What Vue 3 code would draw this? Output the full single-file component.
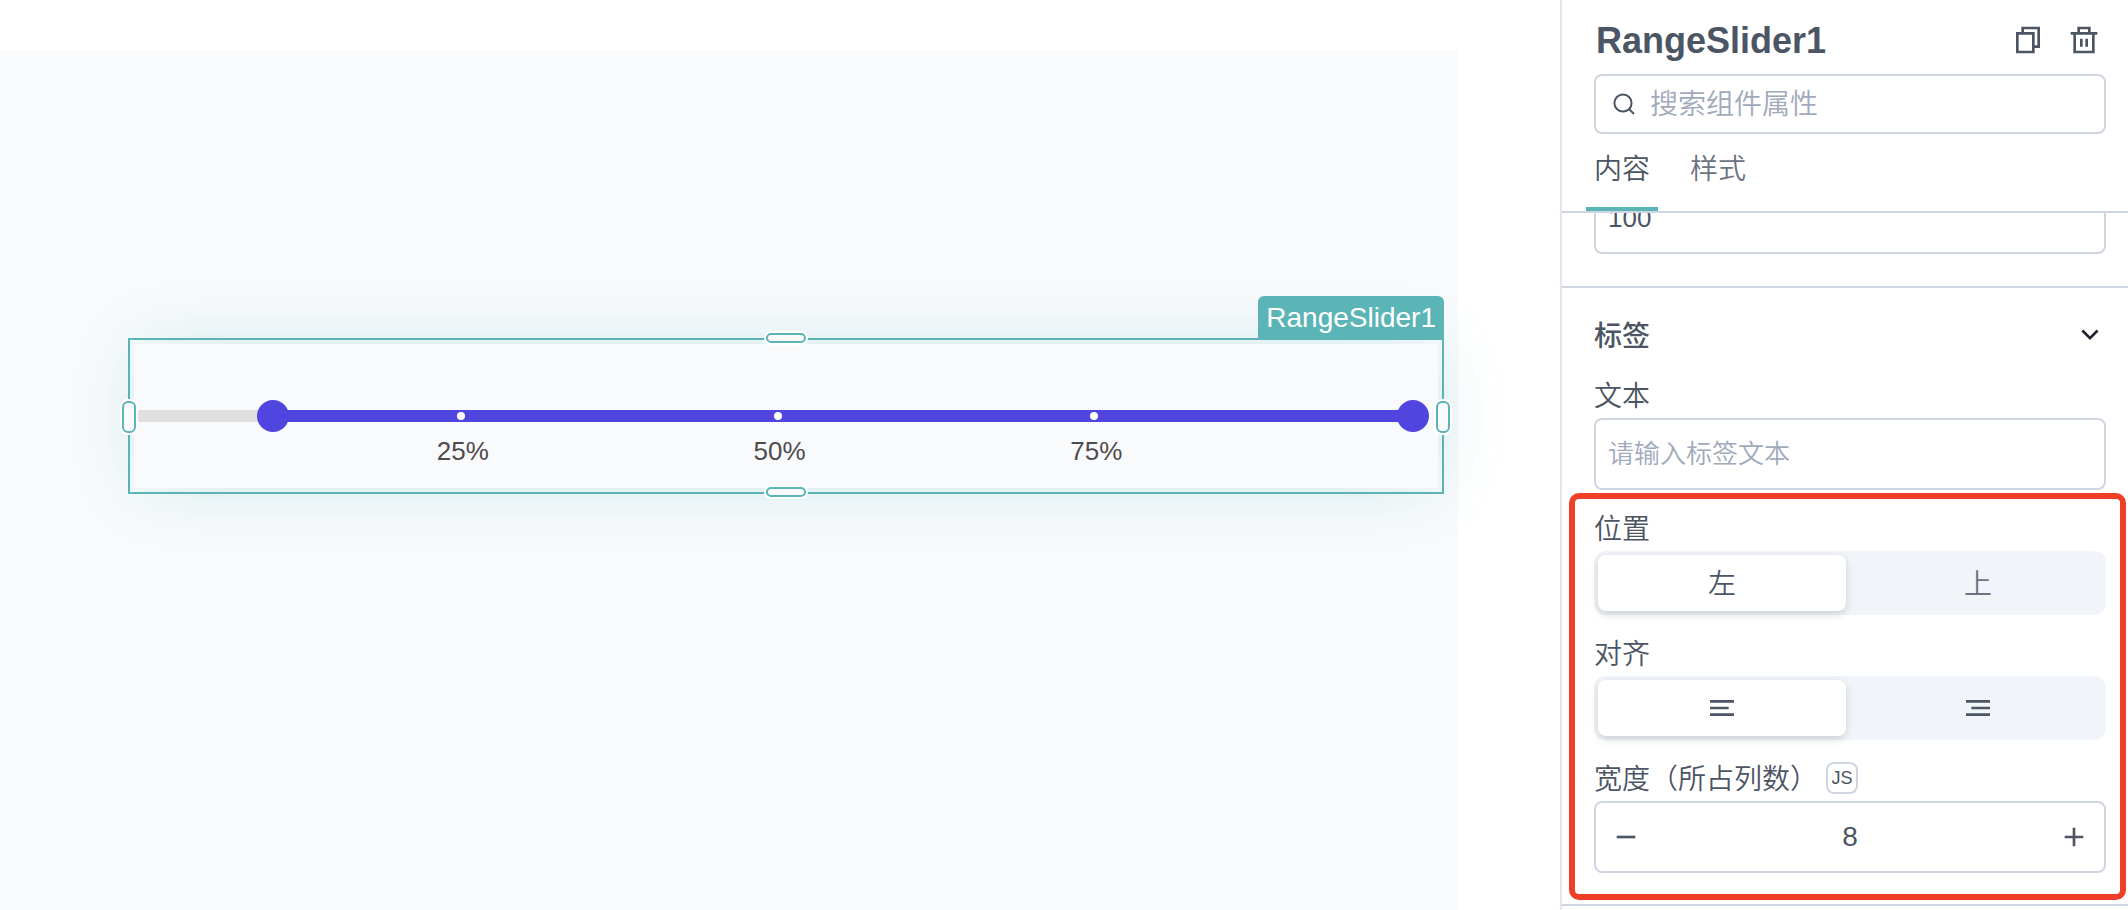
<script setup>
import { ref } from 'vue';

const widgetName = ref('RangeSlider1');
const start = ref(10);
const end = ref(100);
const marks = [25, 50, 75];

const search = ref('');
const tab = ref('content');
const maxValue = ref('100');
const labelText = ref('');
const position = ref('left');
const align = ref('left');
const labelWidth = ref(8);
</script>

<template>
  <div class="editor">
    <main class="workspace">
      <div class="canvas">
        <div class="widget">
          <span class="widget-name">{{ widgetName }}</span>
          <div class="widget-body">
            <div class="slider">
              <div class="track"></div>
              <div class="scale">
                <div class="progress" :style="{ left: start + '%', width: end - start + '%' }"></div>
                <template v-for="mark in marks" :key="mark">
                  <i class="dot" :style="{ left: mark + '%' }"></i>
                  <span class="mark" :style="{ left: mark + '%' }">{{ mark }}%</span>
                </template>
                <input class="thumb" type="range" min="0" max="100" aria-label="start" v-model.number="start">
                <input class="thumb" type="range" min="0" max="100" aria-label="end" v-model.number="end">
              </div>
            </div>
          </div>
          <i class="handle wide top"></i>
          <i class="handle wide bottom"></i>
          <i class="handle tall left"></i>
          <i class="handle tall right"></i>
        </div>
      </div>
    </main>

    <aside class="panel">
      <header class="panel-header">
        <div class="title-row">
          <h1>{{ widgetName }}</h1>
          <button type="button" class="icon-button" aria-label="copy">
            <svg class="icon" viewBox="0 0 24 24"><path d="M4 7h12v14H4zM8 7V3h12v14h-4" /></svg>
          </button>
          <button type="button" class="icon-button" aria-label="delete">
            <svg class="icon" viewBox="0 0 24 24"><path d="M2 7h20M5 7v14h14V7M8 7V3h8v4M10 11v6M14 11v6" /></svg>
          </button>
        </div>
        <label class="box search">
          <svg class="search-icon" viewBox="0 0 24 24"><circle cx="11" cy="10" r="8.6" /><path d="M17 16l5 5" /></svg>
          <input type="text" aria-label="search" placeholder="搜索组件属性" v-model="search">
        </label>
        <nav class="tabs">
          <button type="button" :class="{ active: tab === 'content' }" @click="tab = 'content'">内容</button>
          <button type="button" :class="{ active: tab === 'style' }" @click="tab = 'style'">样式</button>
        </nav>
      </header>

      <div class="panel-scroll">
        <section class="section previous">
          <div class="box">
            <input type="text" aria-label="max" v-model="maxValue">
          </div>
        </section>

        <section class="section">
          <div class="section-title">
            <h2>标签</h2>
            <button type="button" class="icon-button dark" aria-label="collapse">
              <svg class="icon" viewBox="0 0 24 24"><path d="M6.3 9.4l5.7 5.7l5.7-5.7" /></svg>
            </button>
          </div>

          <div class="field">
            <label class="field-label" for="label-text">文本</label>
            <div class="box">
              <input id="label-text" type="text" placeholder="请输入标签文本" v-model="labelText">
            </div>
          </div>

          <div class="highlighted">
            <div class="field">
              <span id="position-label" class="field-label">位置</span>
              <div class="segmented" role="group" aria-labelledby="position-label">
                <button type="button" :class="{ active: position === 'left' }" @click="position = 'left'">左</button>
                <button type="button" :class="{ active: position === 'top' }" @click="position = 'top'">上</button>
              </div>
            </div>

            <div class="field">
              <span id="align-label" class="field-label">对齐</span>
              <div class="segmented icons" role="group" aria-labelledby="align-label">
                <button type="button" aria-label="left" :class="{ active: align === 'left' }" @click="align = 'left'">
                  <svg class="icon" viewBox="0 0 24 24"><path d="M3 7h18M3 12h14M3 17h18" /></svg>
                </button>
                <button type="button" aria-label="right" :class="{ active: align === 'right' }" @click="align = 'right'">
                  <svg class="icon" viewBox="0 0 24 24"><path d="M3 7h18M7 12h14M3 17h18" /></svg>
                </button>
              </div>
            </div>

            <div class="field">
              <div class="label-row">
                <label class="field-label" for="label-width">宽度（所占列数）</label>
                <button type="button" class="js-button">JS</button>
              </div>
              <div class="box stepper">
                <button type="button" class="icon-button" aria-label="decrease" @click="labelWidth--">
                  <svg class="icon" viewBox="0 0 24 24"><path d="M5 12h14" /></svg>
                </button>
                <input id="label-width" type="text" v-model.number="labelWidth">
                <button type="button" class="icon-button" aria-label="increase" @click="labelWidth++">
                  <svg class="icon" viewBox="0 0 24 24"><path d="M5 12h14M12 5v14" /></svg>
                </button>
              </div>
            </div>
          </div>
        </section>
        <section class="section"></section>
      </div>
    </aside>
  </div>
</template>

<style>
body {
  margin: 0;
  background-color: #fff;
}
</style>

<style scoped>
.editor {
  display: flex;
  height: 100vh;
  overflow: hidden;
  color: #4b5563;
  font-family: "Liberation Sans", "Noto Sans CJK SC", sans-serif;
  font-size: 28px;
  font-weight: 350;
}

.editor * {
  box-sizing: border-box;
}

button,
input {
  margin: 0;
  padding: 0;
  border: none;
  outline: none;
  background: none;
  color: inherit;
  font: inherit;
}

button {
  cursor: pointer;
}

/* canvas */
.workspace {
  flex: 1;
  min-width: 0;
  padding: 50px 102px 0 0;
}

.canvas {
  height: 100%;
  padding: 288px 14px 0 128px;
  background-color: #f8fafc;
}

.widget {
  position: relative;
  padding: 4px;
  border: 2px solid #5bb5b7;
}

.widget-name {
  position: absolute;
  right: -2px;
  bottom: 100%;
  height: 44px;
  padding: 0 8px;
  border-radius: 6px 6px 0 0;
  background-color: #5bb5b7;
  color: #fff;
  line-height: 44px;
}

.widget-body {
  padding: 56px 25px 56px 4px;
  background-color: #f9fafc;
  box-shadow: 0 0 72px -12px rgba(91, 181, 183, 0.32);
}

.slider {
  position: relative;
  height: 32px;
  padding: 10px 0 0 8px;
}

.track {
  position: absolute;
  left: 0;
  right: 0;
  top: 10px;
  height: 12px;
  border-radius: 2px;
  background-color: #e0dedf;
}

.scale {
  position: relative;
  height: 12px;
}

.progress {
  position: absolute;
  height: 12px;
  background-color: #5145e0;
}

.dot {
  position: absolute;
  top: 2px;
  width: 8px;
  height: 8px;
  margin-left: -6px;
  border-radius: 50%;
  background-color: #fff;
}

.mark {
  position: absolute;
  top: 25px;
  transform: translateX(-50%);
  color: #4f4b4b;
  font-size: 26px;
  line-height: 32px;
}

.thumb {
  position: absolute;
  left: -16px;
  top: -10px;
  width: calc(100% + 32px);
  height: 32px;
  -webkit-appearance: none;
  appearance: none;
  pointer-events: none;
}

.thumb::-webkit-slider-thumb {
  -webkit-appearance: none;
  width: 32px;
  height: 32px;
  border-radius: 50%;
  background-color: #5145e0;
  pointer-events: auto;
}

.handle {
  position: absolute;
  border: 2px solid #5bb5b7;
  border-radius: 6px;
  background-color: #f9fafc;
  box-shadow: 0 0 0 2px #fff;
}

.handle.wide {
  left: calc(50% - 20px);
  width: 40px;
  height: 10px;
}

.handle.tall {
  top: calc(50% - 15px);
  width: 14px;
  height: 32px;
}

.handle.top {
  top: -7px;
}

.handle.bottom {
  bottom: -5px;
}

.handle.left {
  left: -8px;
}

.handle.right {
  right: -8px;
}

/* property panel */
.panel {
  display: flex;
  flex-direction: column;
  flex: none;
  width: 568px;
  border-left: 2px solid #e4e5ea;
  background-color: #fff;
}

.panel-header {
  padding: 6px 22px 0 32px;
  border-bottom: 2px solid #cfd5e1;
}

.title-row {
  display: flex;
  align-items: center;
  gap: 24px;
  height: 68px;
  padding: 0 6px 0 2px;
}

h1 {
  flex: 1;
  margin: 0;
  padding-top: 2px;
  font-size: 36px;
}

.icon-button {
  display: flex;
}

.icon {
  width: 32px;
  height: 32px;
  fill: none;
  stroke: currentColor;
  stroke-width: 2;
}

.box {
  display: flex;
  align-items: center;
  height: 72px;
  padding: 0 12px;
  border: 2px solid #cfd5e1;
  border-radius: 8px;
  font-size: 26px;
}

.box input {
  flex: 1;
  min-width: 0;
}

.box input::placeholder {
  color: #a0aabb;
  opacity: 1;
}

.search {
  gap: 14px;
  height: 60px;
  padding: 2px 16px 0;
  font-size: 28px;
}

.search-icon {
  width: 24px;
  height: 24px;
  fill: none;
  stroke: #4b5563;
  stroke-width: 2;
}

.tabs {
  display: flex;
  gap: 24px;
  margin-left: -8px;
}

.tabs button {
  height: 77px;
  padding: 0 8px 7px;
  border-bottom: 4px solid transparent;
  color: #6b7280;
}

.tabs button.active {
  border-color: #5bb5b7;
  color: #4b5563;
}

.panel-scroll {
  flex: 1;
  min-height: 0;
  overflow: hidden;
}

.section {
  padding: 22px 22px 31px 32px;
  border-top: 2px solid #cfd5e1;
}

/* content scrolled up under the header */
.section.previous {
  margin-top: -31px;
  padding-top: 0;
  padding-bottom: 32px;
  border-top: none;
}

.section-title {
  display: flex;
  align-items: center;
  justify-content: space-between;
  height: 48px;
  margin-bottom: 14px;
}

h2 {
  margin: 0;
  font-size: 28px;
  font-weight: 500;
}

.dark {
  color: #1f2430;
}

.field-label {
  display: block;
  padding-top: 4px;
  line-height: 42px;
}

.label-row {
  display: flex;
  align-items: center;
  gap: 8px;
}

.js-button {
  width: 32px;
  height: 32px;
  border: 2px solid #cfd5e1;
  border-radius: 8px;
  font-size: 18px;
  line-height: 28px;
}

.highlighted {
  position: relative;
  display: flex;
  flex-direction: column;
  gap: 15px;
  padding-top: 15px;
}

/* marker frame lying over the fields */
.highlighted::after {
  content: "";
  position: absolute;
  top: 3px;
  right: -20px;
  bottom: -27px;
  left: -25px;
  border: 6px solid #ee4026;
  border-radius: 10px;
  pointer-events: none;
}

.segmented {
  display: flex;
  gap: 8px;
  padding: 4px;
  border-radius: 12px;
  background-color: #f1f5f9;
}

.segmented button {
  display: flex;
  flex: 1;
  align-items: center;
  justify-content: center;
  height: 56px;
  padding-bottom: 2px;
  border-radius: 8px;
  color: #6b7280;
}

.segmented.icons button {
  padding-bottom: 0;
  color: #4b5563;
}

.segmented button.active {
  background-color: #fff;
  box-shadow: 0 3px 8px rgba(0, 0, 0, 0.16);
  color: #4b5563;
}

.stepper {
  padding: 0 14px;
  font-size: 28px;
}

.stepper input {
  text-align: center;
}
</style>
